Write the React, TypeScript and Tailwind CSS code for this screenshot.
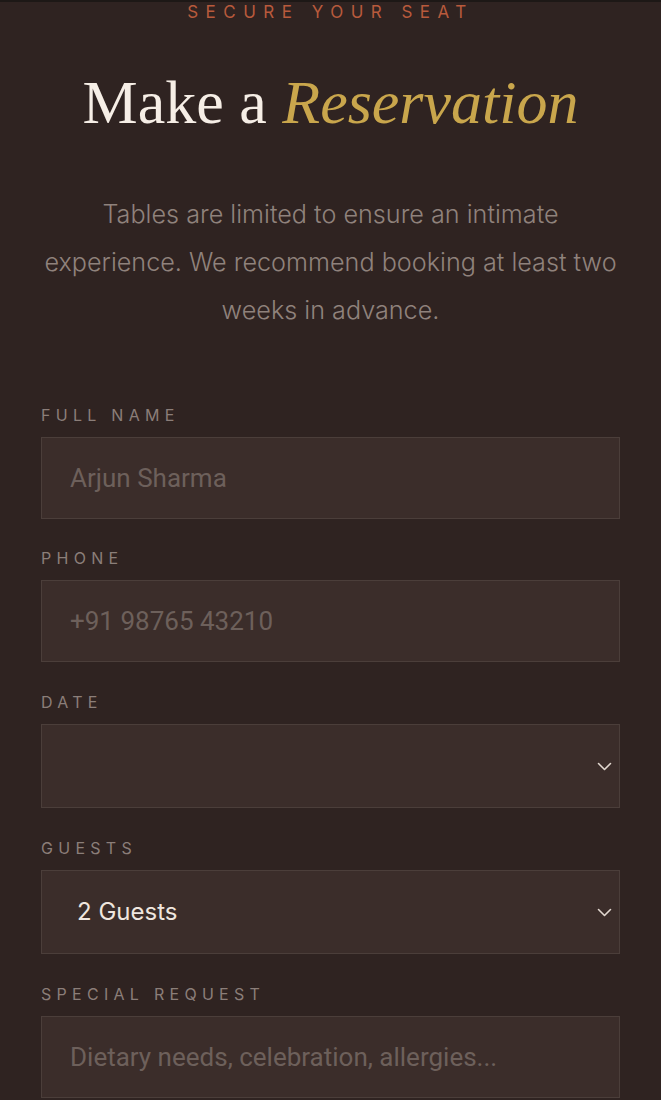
import React from "react";

const Chevron = () => (
  <svg width="15" height="9" viewBox="0 0 15 9" fill="none" className="shrink-0">
    <path d="M1.5 1.5l6 6 6-6" stroke="#e2d8d0" strokeWidth="1.6" strokeLinecap="round" strokeLinejoin="round" />
  </svg>
);

const Label = ({ children }: { children: React.ReactNode }) => (
  <div
    className="text-[16px] leading-[24px] tracking-[0.33em] text-[#8b7e79] mb-[10px]"
    style={{ fontFamily: "Inter, 'Noto Sans', sans-serif" }}
  >
    {children}
  </div>
);

const inputCls =
  "block w-full h-[82px] bg-[#3b2d2a] border border-[#4b3e3a] pl-[28px] text-[26px] text-[#efe6df] placeholder:text-[#6d605b] outline-none";

export default function App() {
  return (
    <div className="min-h-[1100px] bg-[#2f2321] border-t-2 border-[#1d1816] px-[41px] overflow-hidden">
      <div
        className="text-center text-[17px] leading-[20px] tracking-[0.44em] text-[#b85a3c]"
        style={{ fontFamily: "Inter, 'Noto Sans', sans-serif" }}
      >
        SECURE YOUR SEAT
      </div>
      <h1
        className="mt-[43px] text-center text-[62px] leading-[1.2] text-[#f6eee6]"
        style={{ fontFamily: "'Liberation Serif', serif" }}
      >
        Make a <span className="italic text-[#c9a64c]">Reservation</span>
      </h1>
      <p
        className="mt-[51px] -mx-[10px] text-center text-[25.2px] leading-[48px] font-light text-[#8f827c]"
        style={{ fontFamily: "Inter, 'Noto Sans', sans-serif" }}
      >
        Tables are limited to ensure an intimate
        <br />
        experience. We recommend booking at least two
        <br />
        weeks in advance.
      </p>

      <form className="mt-[69px]" style={{ fontFamily: "Roboto, 'Noto Sans', sans-serif" }}>
        <div>
          <Label>FULL NAME</Label>
          <input className={inputCls} placeholder="Arjun Sharma" />
        </div>
        <div className="mt-[27px]">
          <Label>PHONE</Label>
          <input className={inputCls} placeholder="+91 98765 43210" />
        </div>
        <div className="mt-[28px]">
          <Label>DATE</Label>
          <div className="flex items-center justify-end h-[84px] bg-[#3b2d2a] border border-[#4b3e3a] pr-[7px]">
            <Chevron />
          </div>
        </div>
        <div className="mt-[28px]">
          <Label>GUESTS</Label>
          <div className="flex items-center justify-between h-[84px] bg-[#3b2d2a] border border-[#4b3e3a] pl-[35px] pr-[7px]">
            <span
              className="text-[24px] text-[#efe6df]"
              style={{ fontFamily: "Inter, 'Noto Sans', sans-serif" }}
            >
              2 Guests
            </span>
            <Chevron />
          </div>
        </div>
        <div className="mt-[28px]">
          <Label>SPECIAL REQUEST</Label>
          <input className={inputCls} placeholder="Dietary needs, celebration, allergies..." />
        </div>
      </form>
    </div>
  );
}
